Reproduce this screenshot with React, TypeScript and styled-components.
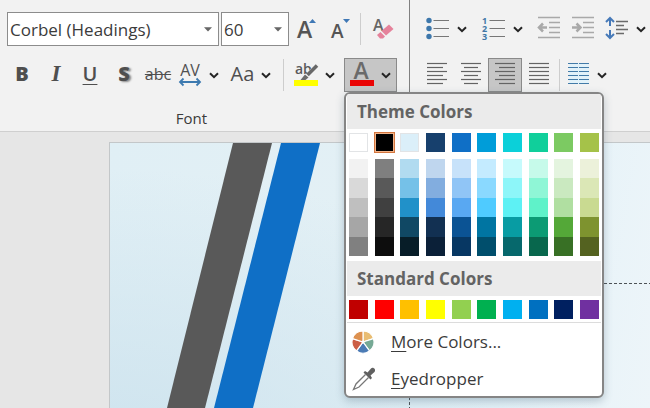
import React from "react";
import styled, { createGlobalStyle, css } from "styled-components";

const Global = createGlobalStyle`
  *, *::before, *::after { box-sizing: border-box; }
  body { margin: 0; background: #e6e6e6; color: #3b3b3b; font-family: "Open Sans", "Noto Sans", sans-serif; }
  button, select { font: inherit; color: inherit; }
  svg { display: block; flex: none; overflow: visible; }
`;

const Page = styled.div`
  display: flex;
  flex-direction: column;
  height: 100vh;
  overflow: hidden;
`;

const Ribbon = styled.header`
  display: flex;
  flex: none;
  position: relative;
  z-index: 1;
  background: #f2f2f2;
  border-bottom: 1px solid #cfcfcf;
`;

const Group = styled.section<{ $divided?: boolean }>`
  display: flex;
  flex: none;
  flex-direction: column;
  gap: 12px;
  padding: ${(p) => (p.$divided ? "12px 7px 0 5px" : "12px 0 0 10px")};
  ${(p) => p.$divided && css`border-right: 1px solid #808080;`}
`;

const Row = styled.div`
  display: flex;
  align-items: center;
  height: 34px;
`;

const GroupLabel = styled.div`
  padding-right: 24px;
  line-height: 29px;
  height: 27px;
  font-size: 15px;
  text-align: center;
`;

const Separator = styled.div`
  width: 1px;
  height: 32px;
  margin: 0 3px;
  background: #cdcdcd;
`;

const SelectBox = styled.label<{ $width: number }>`
  display: grid;
  align-items: center;
  width: ${(p) => p.$width}px;
  height: 34px;
  margin-left: 2px;
  background: #fff;
  border: 1px solid #8c8c8c;
  & > * { grid-area: 1 / 1; }
  & > svg { justify-self: end; margin-right: 6px; pointer-events: none; }
`;

const Select = styled.select`
  appearance: none;
  width: 100%;
  height: 32px;
  padding: 0 2px;
  border: 0;
  background: transparent;
  font-size: 17px;
`;

const Tool = styled.button<{ $width?: number; $active?: boolean }>`
  display: flex;
  flex: none;
  align-items: center;
  justify-content: center;
  gap: 7px;
  width: ${(p) => p.$width ?? 34}px;
  height: 34px;
  padding: 0 0 2px;
  border: 1px solid ${(p) => (p.$active ? "#8a8a8a" : "transparent")};
  background: ${(p) => (p.$active ? "#c6c6c6" : "transparent")};
  color: #4f4f4f;
`;

const Letter = styled.span<{ $kind?: "bold" | "italic" | "underline" | "shadow" | "strike" }>`
  font-size: 20px;
  line-height: 28px;
  ${(p) => p.$kind === "bold" && css`font-weight: 800;`}
  ${(p) => p.$kind === "italic" && css`font-family: "Liberation Serif", serif; font-style: italic; font-weight: 700; font-size: 23px;`}
  ${(p) => p.$kind === "underline" && css`font-weight: 600; text-decoration: underline 1px; text-underline-offset: 3px;`}
  ${(p) => p.$kind === "shadow" && css`font-weight: 800; text-shadow: 2px 1px 2px #888;`}
  ${(p) => p.$kind === "strike" && css`font-size: 16px; line-height: 26px; text-decoration: line-through 1px;`}
`;

const Anchor = styled.div`
  position: relative;
  margin-left: 3px;
`;

const Menu = styled.div`
  position: absolute;
  top: 100%;
  left: 0;
  width: 260px;
  padding: 0 1px;
  background: #fff;
  border: 2px solid #858585;
  border-radius: 6px;
  box-shadow: 0 3px 8px rgba(60, 90, 110, 0.3);
  overflow: hidden;
`;

const Heading = styled.h2`
  margin: 0;
  padding: 0 10px;
  height: 35px;
  line-height: 35px;
  background: #ebebeb;
  color: #636363;
  font-size: 17px;
  font-weight: 700;
`;

const Swatches = styled.div`
  display: flex;
  justify-content: space-between;
  padding: 4px 2px 3px;
  & + ${Heading} { margin-top: 2px; }
`;

const Shades = styled.div`
  display: flex;
  flex-direction: column;
  height: 97px;
`;

const Swatch = styled.button<{ $color: string; $pale?: boolean; $selected?: boolean; $fill?: boolean }>`
  display: block;
  width: 19px;
  height: ${(p) => (p.$fill ? "auto" : "19px")};
  flex: ${(p) => (p.$fill ? "1" : "none")};
  padding: 0;
  background: ${(p) => p.$color};
  border: 0;
  box-shadow: ${(p) =>
    p.$selected
      ? "0 0 0 1px #d3763f, inset 0 0 0 1px #f2b48a"
      : p.$pale
      ? "inset 0 0 0 1px #e2e4e6"
      : "none"};
`;

const MenuItems = styled.div`
  display: flex;
  flex-direction: column;
  gap: 2px;
  padding-top: 1px;
  border-top: 1px solid #dcdcdc;
`;

const MenuItem = styled.button`
  display: grid;
  grid-template-columns: 39px 1fr;
  align-items: center;
  height: 35px;
  padding: 0 6px 0 5px;
  border: 0;
  background: transparent;
  font-size: 17px;
  text-align: left;
  u { text-decoration-thickness: 1px; text-underline-offset: 3px; }
`;

const Workspace = styled.main`
  display: flex;
  flex: 1;
  min-height: 0;
  padding: 10px 0 0 109px;
  background: #e6e6e6;
`;

const Slide = styled.div`
  position: relative;
  flex: 1;
  overflow: hidden;
  border: solid #c3c7c9;
  border-width: 1px 0 0 1px;
  background:
    radial-gradient(ellipse at 0 120%, #cde3ee 0, rgba(205, 227, 238, 0) 65%),
    linear-gradient(100deg, #e0eff5 0, #e3f0f5 45%, #e5f2f8 75%, #edf5f9 100%);
`;

const Placeholder = styled.div`
  position: absolute;
  top: 140px;
  left: 299px;
  right: -2px;
  bottom: -2px;
  border: 1px dashed #4c5256;
`;

const ChevronIcon = styled.svg`
  margin-top: 3px;
`;

const Chevron = () => (
  <ChevronIcon width="10" height="7" viewBox="0 0 10 7" fill="none" stroke="#242424" strokeWidth="2">
    <path d="M1 1.2 5 5.2 9 1.2" />
  </ChevronIcon>
);

const Triangle = () => (
  <svg width="8" height="5" viewBox="0 0 8 5"><path d="M0 0.3h8L4 4.6z" fill="#666" /></svg>
);

const ICON_FONT = '"Open Sans", sans-serif';

const SizeIcon = ({ up }: { up?: boolean }) => (
  <svg width="24" height="26" viewBox="0 0 24 26">
    <text x={up ? 3 : 3} y="23" fontFamily={ICON_FONT} fontSize={up ? 23 : 19} fontWeight="600" fill="#555">A</text>
    {up ? <path d="M15 8l3.500-4 3.500 4z" fill="#3f78b5" /> : <path d="M15 4h7L18.500 8z" fill="#3f78b5" />}
  </svg>
);

const EraserIcon = () => (
  <svg width="22" height="24" viewBox="0 0 22 24">
    <text x="1" y="15" fontFamily={ICON_FONT} fontSize="16" fontWeight="600" fill="#666">A</text>
    <path d="M17 8.500 21.500 13 14 19.500 9.500 15z" fill="#e5829b" />
    <path d="M8.500 16 13 20.500 11 22.500H8L5 19z" fill="#e5829b" />
  </svg>
);

const SpacingIcon = () => (
  <svg width="24" height="24" viewBox="0 0 24 24">
    <text x="12" y="14" textAnchor="middle" fontFamily={ICON_FONT} fontSize="16" fontWeight="500" fill="#505050">AV</text>
    <path d="M2 20h20M5.500 16.500 2 20l3.500 3.500M18.500 16.500 22 20l-3.500 3.500" fill="none" stroke="#3d7ab0" strokeWidth="1.800" />
  </svg>
);

const HighlightIcon = () => (
  <svg width="24" height="28" viewBox="0 0 24 28">
    <text x="1" y="14" fontFamily={ICON_FONT} fontSize="14" fontWeight="600" fill="#5a5a5a">ab</text>
    <path d="M23.500 5.500 14.500 15" stroke="#f2f2f2" strokeWidth="5" />
    <path d="M23 5.500 13.500 15" stroke="#686868" strokeWidth="3.500" />
    <path d="M11 14.500 14.500 17.500 11.500 20H6.500z" fill="#6b6b6b" />
    <path d="M0 20h24v6H0z" fill="#ffff00" />
  </svg>
);

const FontColorIcon = () => (
  <svg width="24" height="28" viewBox="0 0 24 28">
    <text x="11" y="19" textAnchor="middle" fontFamily={ICON_FONT} fontSize="23" fontWeight="600" fill="#6a6a6a">A</text>
    <path d="M0 20h24v6H0z" fill="#ea0505" />
  </svg>
);

const ListIcon = ({ numbered }: { numbered?: boolean }) => (
  <svg width="24" height="26" viewBox="0 0 24 26">
    {[5, 13, 21].map((y, i) => (
      <React.Fragment key={y}>
        {numbered ? (
          <text x="0" y={y + 4} fontFamily={ICON_FONT} fontSize="9" fontWeight="700" fill="#4177a6">{i + 1}</text>
        ) : (
          <circle cx="3" cy={y + 0.5} r="2.700" fill="#3d77ab" />
        )}
        <path d={`M7.500 ${y}.5H23`} stroke="#777" />
      </React.Fragment>
    ))}
  </svg>
);

const IndentIcon = ({ increase }: { increase?: boolean }) => (
  <svg width="24" height="24" viewBox="0 0 24 24" fill="none" stroke="#a9a9a9">
    <path d="M1 1.500h22M12 6.500h11M12 11.500h11M12 16.500h11M1 21.500h22" strokeWidth="1.400" />
    <path d={increase ? "M1 11.500h8M5.500 7.500l4 4-4 4" : "M10 11.500H2M6 7.500l-4 4 4 4"} strokeWidth="2.500" />
  </svg>
);

const LineSpacingIcon = () => (
  <svg width="24" height="24" viewBox="0 0 24 24" fill="none">
    <path d="M5 10V2M1 6l4-4 4 4M5 14v8M1 18l4 4 4-4" stroke="#4679b8" strokeWidth="2" />
    <path d="M11 5.500h12M11 9.500h8M11 13.500h12M11 17.500h8" stroke="#6a6a6a" strokeWidth="1.400" />
  </svg>
);

const alignments: Record<string, [number, number][]> = {
  left: [[1, 21], [1, 17], [1, 21], [1, 17], [1, 21], [1, 17]],
  center: [[1, 21], [4, 18], [1, 21], [4, 18], [1, 21], [4, 18]],
  right: [[1, 21], [5, 21], [1, 21], [5, 21], [1, 21], [5, 21]],
  justify: [[1, 21], [1, 21], [1, 21], [1, 21], [1, 21], [1, 21]],
};

const AlignIcon = ({ kind }: { kind: string }) => (
  <svg width="22" height="22" viewBox="0 0 22 22" stroke="#646464" strokeWidth="1.200">
    {alignments[kind].map(([a, b], i) => <path key={i} d={`M${a} ${i * 4 + 0.5}H${b}`} />)}
  </svg>
);

const ColumnsIcon = () => (
  <svg width="22" height="22" viewBox="0 0 22 22">
    <path d="M1 0h20v21H1z" fill="#e2f2fa" />
    {[0, 1, 2, 3, 4, 5].map((i) => (
      <path key={i} d={`M0 ${i * 4 + 0.5}H10M11 ${i * 4 + 0.5}H21`} stroke="#437ba8" strokeWidth="1.200" />
    ))}
  </svg>
);

const WheelIcon = () => {
  const colors = ["#e9bd73", "#76a995", "#4b7bb5", "#cb5d45", "#dd9150"];
  const point = (deg: number, r: number) => {
    const a = ((deg - 90) * Math.PI) / 180;
    return `${11 + r * Math.cos(a)} ${11 + r * Math.sin(a)}`;
  };
  return (
    <svg width="22" height="22" viewBox="0 0 22 22">
      {colors.map((c, i) => (
        <path key={c} d={`M11 11L${point(i * 72, 11)}A11 11 0 0 1 ${point(i * 72 + 72, 11)}Z`} fill={c} stroke="#fff" strokeWidth="1.200" />
      ))}
      <circle cx="11" cy="11" r="1.500" fill="#fff" />
    </svg>
  );
};

const DropperIcon = () => (
  <svg width="24" height="24" viewBox="0 0 24 24">
    <path d="M13.500 7.500 4 17 1.500 22.500 7 20 16.500 10.500" fill="#fff" stroke="#777" strokeWidth="1.300" />
    <path d="M11.500 5.500 13 4l2.500 1.500 3.500-4c2-2 5.500 1 3.500 3.500L18.500 8.500 20 11l-1.500 1.500z" fill="#606060" />
  </svg>
);

const themeColors: [string, string, string[]][] = [
  ["White", "#ffffff", ["#f2f2f2", "#d9d9d9", "#bfbfbf", "#a6a6a6", "#808080"]],
  ["Black", "#000000", ["#7f7f7f", "#595959", "#404040", "#262626", "#0d0d0d"]],
  ["Ice blue", "#dbeff9", ["#b1dbf0", "#75c1e8", "#2191c9", "#104864", "#071d28"]],
  ["Dark blue", "#17406d", ["#bfd6ee", "#82addf", "#4389d9", "#123052", "#0b2038"]],
  ["Blue", "#0f6fc6", ["#c7e2fa", "#90c5f6", "#59a8f2", "#0b5394", "#073763"]],
  ["Bright blue", "#009dd9", ["#c4ebff", "#8ad9ff", "#4fcbff", "#0075a2", "#004e6c"]],
  ["Turquoise", "#0bd0d9", ["#c6fafc", "#8df6f9", "#5df1f4", "#089ca3", "#06686c"]],
  ["Green", "#10cf9b", ["#c6faea", "#8ff6d6", "#5ff2c9", "#0c9b74", "#08674d"]],
  ["Light green", "#7cca62", ["#e4f4df", "#cae9c0", "#b0dfa1", "#54a838", "#387025"]],
  ["Lime", "#a5c249", ["#ecf1da", "#dbe7b6", "#c9da91", "#7e932f", "#546220"]],
];

const standardColors: [string, string][] = [
  ["Dark red", "#c00000"], ["Red", "#ff0000"], ["Orange", "#ffc000"], ["Yellow", "#ffff00"], ["Light green", "#92d050"],
  ["Green", "#00b050"], ["Light blue", "#00b0f0"], ["Blue", "#0070c0"], ["Dark blue", "#002060"], ["Purple", "#7030a0"],
];

const ColorMenu = () => (
  <Menu role="menu" aria-label="Font color">
    <Heading>Theme Colors</Heading>
    <Swatches>
      {themeColors.map(([name, color], i) => (
        <Swatch key={name} aria-label={name} $color={color} $pale={i === 0 || i === 2} $selected={i === 1} />
      ))}
    </Swatches>
    <Swatches>
      {themeColors.map(([name, , shades]) => (
        <Shades key={name}>
          {shades.map((shade, i) => <Swatch key={shade} aria-label={`${name}, shade ${i + 1}`} $color={shade} $fill />)}
        </Shades>
      ))}
    </Swatches>
    <Heading>Standard Colors</Heading>
    <Swatches>
      {standardColors.map(([name, color]) => <Swatch key={name} aria-label={name} $color={color} />)}
    </Swatches>
    <MenuItems>
      <MenuItem role="menuitem"><WheelIcon /><span><u>M</u>ore Colors...</span></MenuItem>
      <MenuItem role="menuitem"><DropperIcon /><span><u>E</u>yedropper</span></MenuItem>
    </MenuItems>
  </Menu>
);

export default function App() {
  return (
    <Page>
      <Global />
      <Ribbon>
        <Group $divided aria-label="Font">
          <Row>
            <SelectBox $width={212}>
              <Select aria-label="Font name"><option>Corbel (Headings)</option></Select>
              <Triangle />
            </SelectBox>
            <SelectBox $width={68}>
              <Select aria-label="Font size"><option>60</option></Select>
              <Triangle />
            </SelectBox>
            <Tool aria-label="Increase font size"><SizeIcon up /></Tool>
            <Tool aria-label="Decrease font size"><SizeIcon /></Tool>
            <Separator />
            <Tool $width={38} aria-label="Clear formatting"><EraserIcon /></Tool>
          </Row>
          <Row>
            <Tool aria-label="Bold"><Letter $kind="bold">B</Letter></Tool>
            <Tool aria-label="Italic"><Letter $kind="italic">I</Letter></Tool>
            <Tool aria-label="Underline"><Letter $kind="underline">U</Letter></Tool>
            <Tool aria-label="Shadow"><Letter $kind="shadow">S</Letter></Tool>
            <Tool aria-label="Strikethrough"><Letter $kind="strike">abc</Letter></Tool>
            <Tool $width={47} aria-label="Character spacing"><SpacingIcon /><Chevron /></Tool>
            <Tool $width={58} aria-label="Change case"><Letter>Aa</Letter><Chevron /></Tool>
            <Separator />
            <Tool $width={54} aria-label="Highlight color"><HighlightIcon /><Chevron /></Tool>
            <Anchor>
              <Tool $width={53} $active aria-label="Font color" aria-expanded="true"><FontColorIcon /><Chevron /></Tool>
              <ColorMenu />
            </Anchor>
          </Row>
          <GroupLabel>Font</GroupLabel>
        </Group>
        <Group aria-label="Paragraph">
          <Row>
            <Tool $width={52} aria-label="Bullets"><ListIcon /><Chevron /></Tool>
            <Tool $width={60} aria-label="Numbering"><ListIcon numbered /><Chevron /></Tool>
            <Tool aria-label="Decrease indent"><IndentIcon /></Tool>
            <Tool aria-label="Increase indent"><IndentIcon increase /></Tool>
            <Tool $width={50} aria-label="Line spacing"><LineSpacingIcon /><Chevron /></Tool>
          </Row>
          <Row>
            <Tool aria-label="Align left"><AlignIcon kind="left" /></Tool>
            <Tool aria-label="Center"><AlignIcon kind="center" /></Tool>
            <Tool $active aria-label="Align right"><AlignIcon kind="right" /></Tool>
            <Tool aria-label="Justify"><AlignIcon kind="justify" /></Tool>
            <Separator />
            <Tool $width={48} aria-label="Columns"><ColumnsIcon /><Chevron /></Tool>
          </Row>
        </Group>
      </Ribbon>
      <Workspace>
        <Slide>
          <svg width="230" height="265" viewBox="0 0 230 265">
            <path d="M123 0h39L95 265H57z" fill="#595959" />
            <path d="M171 0h39L143 265H104z" fill="#0f6fc6" />
          </svg>
          <Placeholder />
        </Slide>
      </Workspace>
    </Page>
  );
}
